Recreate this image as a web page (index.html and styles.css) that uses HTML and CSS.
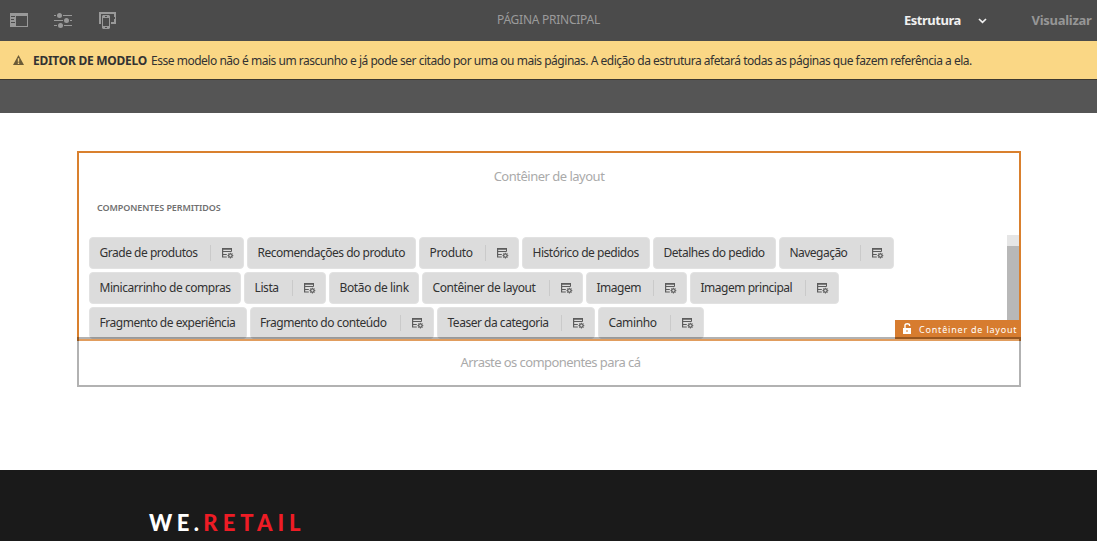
FILE: index.html
```
<!DOCTYPE html>
<html lang="pt-BR">
<head>
<meta charset="utf-8">
<title>Página principal</title>
<link rel="stylesheet" href="styles.css">
</head>
<body>
<svg class="defs" aria-hidden="true">
  <symbol id="policy" viewBox="0 0 12 12">
    <path fill="#5c5c5c" d="M0 1h10v1.7H0zM0 1h1.2v3.9H0zM9 1h1v3.8H9zM0 4h9v1H0zM0 4h1.2v6.5H0zM0 6.9h4.8v1H0zM0 9.5h4.8v1H0z"/>
    <circle cx="8.4" cy="8.6" r="1.8" fill="none" stroke="#5c5c5c" stroke-width="1.3"/>
    <path stroke="#5c5c5c" stroke-width="1" d="M8.4 5.8v1M8.4 10.5v1M5.5 8.6h1M10.3 8.6h1M6.4 6.6l.6.6M10.4 6.6l-.6.6M6.4 10.6l.6-.6M10.4 10.6l-.6-.6"/>
  </symbol>
</svg>
<header class="topbar">
  <div class="tools">
    <svg width="18" height="14" viewBox="0 0 18 14"><path fill="#999" fill-rule="evenodd" d="M0 0h18v14H0zM6 3v10h11V3zM1 3v1h4V3zM1 6v1h3V6zM1 9v1h4V9z"/></svg>
    <svg width="18" height="15" viewBox="0 0 18 15"><path stroke="#999" d="M0 2.5h2M9 2.5h9M0 7.5h9M16 7.5h2M0 12.5h3M10 12.5h8"/><g fill="#999"><circle cx="5.5" cy="2.5" r="2.5"/><circle cx="12.5" cy="7.5" r="2.5"/><circle cx="6.5" cy="12.5" r="2.5"/></g></svg>
    <svg class="devices" width="18" height="18" viewBox="0 0 18 18"><path fill="#999" fill-rule="evenodd" d="M0 1h17v12h-5v-2h3V3H2v10H0z"/><path fill="#4b4b4b" d="M15 6h1v2h-1zM2 3h10v10H2z"/><path fill="#999" fill-rule="evenodd" d="M4 4h6l1 1v12l-1 1H4l-1-1V5zM4 7v8h6V7zM6 5v1h2V5zM6 16v1h2v-1z"/></svg>
  </div>
  <div class="title">PÁGINA PRINCIPAL</div>
  <div class="modes">
    <span class="mode active">Estrutura</span>
    <svg width="9" height="6" viewBox="0 0 9 6"><path d="M1 1l3.5 3.4L8 1" fill="none" stroke="#f0f0f0" stroke-width="1.7"/></svg>
    <span class="mode preview">Visualizar</span>
  </div>
</header>
<div class="notice">
  <svg width="11" height="10" viewBox="0 0 11 10"><path fill="#6b5b37" fill-rule="evenodd" d="M5.5 0L11 10H0zM4.8 3.2v3.6h1.4V3.2zM4.8 7.6V9h1.4V7.6z"/></svg>
  <strong>EDITOR DE MODELO</strong>
  <span>Esse modelo não é mais um rascunho e já pode ser citado por uma ou mais páginas. A edição da estrutura afetará todas as páginas que fazem referência a ela.</span>
</div>
<div class="band"></div>
<main class="canvas">
  <section class="container">
    <h2>Contêiner de layout</h2>
    <h3>COMPONENTES PERMITIDOS</h3>
    <div class="allowed">
      <div class="rows">
        <div class="row">
          <div class="chip grade"><span>Grade de produtos</span><i><svg><use href="#policy"/></svg></i></div>
          <div class="chip recom"><span>Recomendações do produto</span></div>
          <div class="chip produto"><span>Produto</span><i><svg><use href="#policy"/></svg></i></div>
          <div class="chip historico"><span>Histórico de pedidos</span></div>
          <div class="chip detalhes"><span>Detalhes do pedido</span></div>
          <div class="chip naveg"><span>Navegação</span><i><svg><use href="#policy"/></svg></i></div>
        </div>
        <div class="row">
          <div class="chip mini"><span>Minicarrinho de compras</span></div>
          <div class="chip lista"><span>Lista</span><i><svg><use href="#policy"/></svg></i></div>
          <div class="chip botao"><span>Botão de link</span></div>
          <div class="chip layout"><span>Contêiner de layout</span><i><svg><use href="#policy"/></svg></i></div>
          <div class="chip imagem"><span>Imagem</span><i><svg><use href="#policy"/></svg></i></div>
          <div class="chip principal"><span>Imagem principal</span><i><svg><use href="#policy"/></svg></i></div>
        </div>
        <div class="row">
          <div class="chip exper"><span>Fragmento de experiência</span></div>
          <div class="chip conteudo"><span>Fragmento do conteúdo</span><i><svg><use href="#policy"/></svg></i></div>
          <div class="chip teaser"><span>Teaser da categoria</span><i><svg><use href="#policy"/></svg></i></div>
          <div class="chip caminho"><span>Caminho</span><i><svg><use href="#policy"/></svg></i></div>
        </div>
      </div>
      <div class="scroll"><div class="thumb"></div></div>
    </div>
    <div class="badge">
      <svg width="9" height="11" viewBox="0 0 9 11"><path fill="#fff" fill-rule="evenodd" d="M0 5h8v6H0zM3.5 7v2h1V7z"/><path fill="none" stroke="#fff" stroke-width="1.4" d="M2 5V2.2Q2 .8 4.3.8T6.6 2.2V3"/></svg>
      <span>Contêiner de layout</span>
    </div>
  </section>
  <section class="dropzone"><span>Arraste os componentes para cá</span></section>
</main>
<footer class="footer"><span class="we">WE.</span><span class="retail">RETAIL</span></footer>
</body>
</html>
```
FILE: styles.css
```
* { box-sizing: border-box; }
body { margin: 0; height: 541px; overflow: hidden; background: #fff; font-family: "Noto Sans", "Open Sans", sans-serif; font-size: 12px; color: #323232; white-space: nowrap; }
svg { display: block; flex: none; }
.defs { position: absolute; width: 0; height: 0; }
.topbar { height: 41px; background: #4b4b4b; display: grid; grid-template-columns: 1fr 104px 1fr; align-items: center; }
.tools { display: flex; align-items: center; gap: 26px; padding: 0 0 1px 10px; }
.devices { margin: 0 0 1px 1px; }
.title { color: #9b9b9b; text-align: center; letter-spacing: -.25px; padding-bottom: 2px; }
.modes { display: flex; align-items: center; padding-left: 303.5px; }
.mode { font-weight: 700; font-size: 13px; line-height: 18px; padding-bottom: 1px; }
.active { color: #f0f0f0; letter-spacing: -.48px; width: 74px; }
.preview { color: #969696; letter-spacing: -.28px; margin-left: 44.5px; }
.notice { height: 39px; background: #fad785; border-bottom: 1px solid #3d392f; display: flex; align-items: center; padding: 0 0 0 12.5px; }
.notice strong { margin-left: 9.5px; width: 118px; letter-spacing: -.27px; }
.notice span { letter-spacing: -.48px; }
.band { height: 33px; background: #555; }
.canvas { height: 357px; padding: 38px 76px 0 77px; }
.container { height: 190px; border: 2px solid #d9802e; position: relative; padding-left: 10px; }
.container h2 { margin: 12px 10px 0 0; font-weight: 400; font-size: 13px; line-height: 22px; color: #aaa; text-align: center; letter-spacing: -.5px; }
.container h3 { margin: 13px 0 0 8px; font-size: 9px; line-height: 16px; color: #707070; letter-spacing: -.08px; font-weight: 600; }
.allowed { display: flex; justify-content: space-between; margin-top: 19px; height: 104px; overflow: hidden; }
.rows { display: flex; flex-direction: column; gap: 3px; padding-top: 2px; }
.row { display: flex; gap: 3px; flex: none; }
.scroll { width: 12px; height: 102px; background: #e6e6e6; padding-top: 11px; }
.thumb { height: 91px; background: #b8b8b8; }
.chip { height: 32px; background: #dcdcdc; border: 1px solid #e2e2e2; border-radius: 4px; display: flex; align-items: center; justify-content: space-between; padding: 0 0 1px 9.5px; letter-spacing: -.48px; }
.chip i { width: 33px; height: 16px; border-left: 1px solid #cacaca; padding: 2px 0 0 11px; }
.chip i svg { width: 12px; height: 12px; }
.grade { width: 155px; }
.recom { width: 169px; }
.produto { width: 100px; letter-spacing: -.35px; }
.historico { width: 128px; }
.detalhes { width: 123px; }
.naveg { width: 115px; letter-spacing: -.53px; }
.mini { width: 152px; letter-spacing: -.44px; }
.lista { width: 82px; letter-spacing: -.4px; }
.botao { width: 90px; letter-spacing: -.35px; }
.layout { width: 161px; letter-spacing: -.42px; }
.imagem { width: 101px; }
.principal { width: 149px; }
.exper { width: 157.5px; }
.conteudo { width: 184.5px; }
.teaser { width: 158px; }
.caminho { width: 106px; letter-spacing: -.35px; }
.badge { position: absolute; right: -2px; bottom: 0; width: 126px; height: 19px; background: #d77c2f; color: #fff; display: flex; align-items: center; padding: 0 0 0 8px; font-size: 9px; }
.badge svg { margin-bottom: 2px; }
.badge span { margin-left: 7px; letter-spacing: .8px; }
.dropzone { position: relative; height: 50px; margin-top: -4px; border: 2px solid rgba(0,0,0,.3); background: rgba(255,255,255,.23); background-clip: padding-box; display: flex; justify-content: center; align-items: center; padding-left: 3px; color: #aaa; font-size: 13px; letter-spacing: -.57px; }
.footer { height: 71px; background: #1a1a1a; padding: 36px 0 0 149px; font-family: Lato, sans-serif; font-size: 22px; line-height: 33px; font-weight: 900; letter-spacing: 5px; color: #fff; }
.we { letter-spacing: 4.4px; }
.retail { color: #ee1c25; }
```
